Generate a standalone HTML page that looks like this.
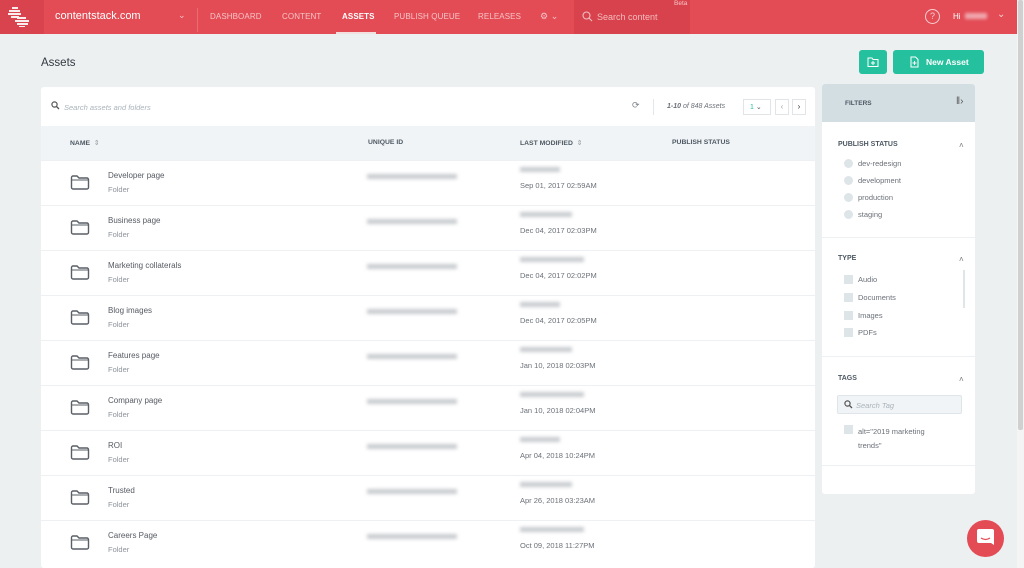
<!DOCTYPE html>
<html><head><meta charset="utf-8"><style>
*{box-sizing:border-box;margin:0;padding:0}
body{width:1024px;height:568px;overflow:hidden;background:#edf0f1;font-family:"Liberation Sans",sans-serif;position:relative;color:#4a4f56}
.top{position:absolute;left:0;top:0;width:1017px;height:34px;background:#e34b55}
.abs{position:absolute}
.nav{position:absolute;top:12px;font-size:8px;color:#f6c4c7;letter-spacing:.1px}
.blur{position:absolute;background:#c9ccd0;filter:blur(1.8px);height:5px}
.row{position:absolute;left:41px;width:774px;height:45px;border-top:1px solid #eef1f3;background:#fff}
.ttl{position:absolute;left:67px;top:10px;font-size:8px;color:#555a62}
.sub{position:absolute;left:67px;top:24px;font-size:7.5px;color:#8e949b}
.dt{position:absolute;left:479px;top:20px;font-size:7.5px;color:#6b7178}
.side{position:absolute;left:822px;top:84px;width:153px;height:410px;background:#fff;border-radius:3px;overflow:hidden}
.h{position:absolute;font-size:7px;font-weight:bold;color:#4d5863}
.opt{position:absolute;font-size:7.5px;color:#6b7178}
.dot{position:absolute;width:9px;height:9px;border-radius:50%;background:#dde5e8}
.cb{position:absolute;width:9px;height:9px;background:#dde5e8}
</style></head><body>
<div class="top"></div>
<div class="abs" style="left:0;top:0;width:44px;height:34px;background:#d9434d"></div>
<svg class="abs" style="left:8px;top:7px" width="26" height="20"><g fill="#fff" opacity=".9">
<rect x="4" y="0" width="6" height="2"/><rect x="1" y="3" width="11" height="2"/><rect x="0" y="6" width="13" height="2"/><rect x="3" y="9" width="8" height="2"/>
<rect x="9" y="10" width="9" height="2"/><rect x="7" y="13" width="14" height="2"/><rect x="9" y="16" width="11" height="2"/><rect x="11" y="19" width="6" height="1.5"/></g></svg>
<div class="abs" style="left:55px;top:10px;font-size:11px;color:#fff">contentstack.com</div>
<div class="abs" style="left:178px;top:10px;font-size:9px;color:#f6c4c7">⌄</div>
<div class="abs" style="left:197px;top:8px;width:1px;height:24px;background:#ea6b73"></div>
<div class="nav" style="left:210px">DASHBOARD</div>
<div class="nav" style="left:282px">CONTENT</div>
<div class="nav" style="left:342px;color:#fff;font-weight:bold">ASSETS</div>
<div class="abs" style="left:336px;top:32px;width:40px;height:2px;background:#f2dfe0"></div>
<div class="nav" style="left:394px">PUBLISH QUEUE</div>
<div class="nav" style="left:478px">RELEASES</div>
<div class="nav" style="left:540px;font-size:9px;top:11px">⚙ ⌄</div>
<div class="abs" style="left:574px;top:0;width:116px;height:34px;background:#d8424c"></div>
<svg class="abs" style="left:582px;top:11px" width="11" height="11"><circle cx="4.5" cy="4.5" r="3.5" fill="none" stroke="#f2bcc0" stroke-width="1.1"/><line x1="7" y1="7" x2="10" y2="10" stroke="#f2bcc0" stroke-width="1.1"/></svg>
<div class="abs" style="left:597px;top:12px;font-size:9px;color:#f2bcc0">Search content</div>
<div class="abs" style="left:674px;top:0;font-size:6.5px;color:#f6c4c7">Beta</div>
<div class="abs" style="left:925px;top:9px;width:15px;height:15px;border:1.2px solid #f6d0d3;border-radius:50%;color:#f6d0d3;font-size:9px;text-align:center;line-height:13px">?</div>
<div class="abs" style="left:953px;top:12px;font-size:8px;color:#fff">Hi</div>
<div class="abs" style="left:965px;top:13px;width:22px;height:6px;background:#f0a7ad;filter:blur(1.5px)"></div>
<div class="abs" style="left:997px;top:9px;font-size:10px;color:#f6d0d3">⌄</div>
<div class="abs" style="left:1017px;top:0;width:7px;height:568px;background:#f4f4f4"></div>
<div class="abs" style="left:1018px;top:0;width:5px;height:430px;background:#d0d0d0;border-radius:2px"></div>

<div class="abs" style="left:41px;top:57px;font-size:11.5px;color:#333a42">Assets</div>
<div class="abs" style="left:859px;top:50px;width:28px;height:24px;background:#25c09e;border-radius:3px"></div>
<svg class="abs" style="left:867px;top:57px" width="12" height="10"><path d="M1 1h4l1 1.5h5v7H1z" fill="none" stroke="#fff" stroke-width="1"/><path d="M6 4v4M4 6h4" stroke="#fff"/></svg>
<div class="abs" style="left:893px;top:50px;width:91px;height:24px;background:#25c09e;border-radius:3px"></div>
<svg class="abs" style="left:910px;top:56px" width="9" height="12"><path d="M1 1h4.5L8 3.5V11H1z" fill="none" stroke="#fff"/><path d="M4.5 5v4M2.5 7h4" stroke="#fff"/></svg>
<div class="abs" style="left:926px;top:57px;font-size:8.5px;color:#fff;font-weight:bold">New Asset</div>

<div class="abs" style="left:41px;top:87px;width:774px;height:481px;background:#fff;border-radius:3px"></div>
<svg class="abs" style="left:51px;top:101px" width="9" height="9"><circle cx="3.5" cy="3.5" r="2.6" fill="none" stroke="#555" stroke-width="1.2"/><line x1="5.5" y1="5.5" x2="8" y2="8" stroke="#555" stroke-width="1.3"/></svg>
<div class="abs" style="left:64px;top:103px;font-size:7.5px;color:#a9b3bb;font-style:italic">Search assets and folders</div>
<div class="abs" style="left:632px;top:100px;font-size:9px;color:#7a8088">⟳</div>
<div class="abs" style="left:653px;top:99px;width:1px;height:16px;background:#e3e7ea"></div>
<div class="abs" style="left:667px;top:103px;font-size:7px;color:#6b7178;font-style:italic"><b>1-10</b> of 848 Assets</div>
<div class="abs" style="left:743px;top:99px;width:28px;height:16px;border:1px solid #e1e5e8;font-size:7px;color:#25c09e;padding:3px 0 0 6px">1 <span style="color:#555">⌄</span></div>
<div class="abs" style="left:775px;top:99px;width:14px;height:16px;border:1px solid #e1e5e8;font-size:8px;color:#aaa;text-align:center;line-height:14px">‹</div>
<div class="abs" style="left:792px;top:99px;width:14px;height:16px;border:1px solid #e1e5e8;font-size:8px;color:#333;text-align:center;line-height:14px">›</div>
<div class="abs" style="left:41px;top:126px;width:774px;height:34px;background:#f1f4f6"></div>
<div class="h" style="left:70px;top:139px;font-size:6.8px">NAME &nbsp;<span style="font-weight:normal;color:#999">⇕</span></div>
<div class="h" style="left:368px;top:139px;font-size:6.8px">UNIQUE ID</div>
<div class="h" style="left:520px;top:139px;font-size:6.8px">LAST MODIFIED &nbsp;<span style="font-weight:normal;color:#999">⇕</span></div>
<div class="h" style="left:672px;top:139px;font-size:6.8px">PUBLISH STATUS</div>

<div id="rows"></div>
<script>
var d=[["Developer page","Sep 01, 2017 02:59AM"],["Business page","Dec 04, 2017 02:03PM"],["Marketing collaterals","Dec 04, 2017 02:02PM"],["Blog images","Dec 04, 2017 02:05PM"],["Features page","Jan 10, 2018 02:03PM"],["Company page","Jan 10, 2018 02:04PM"],["ROI","Apr 04, 2018 10:24PM"],["Trusted","Apr 26, 2018 03:23AM"],["Careers Page","Oct 09, 2018 11:27PM"]];
var h="";d.forEach(function(r,i){var t=160+i*45;h+='<div class="row" style="top:'+t+'px"><svg style="position:absolute;left:29px;top:13px" width="20" height="16"><path d="M1.5 3.5a1.5 1.5 0 0 1 1.5-1.5h4l2 2h8a1.5 1.5 0 0 1 1.5 1.5v8a1.5 1.5 0 0 1-1.5 1.5H3a1.5 1.5 0 0 1-1.5-1.5z" fill="none" stroke="#5a5f66" stroke-width="1.4"/><line x1="2" y1="6" x2="18" y2="6" stroke="#5a5f66" stroke-width="1"/></svg><div class="ttl">'+r[0]+'</div><div class="sub">Folder</div><div class="blur" style="left:326px;top:13px;width:90px"></div><div class="blur" style="left:479px;top:6px;width:'+(40+(i%3)*12)+'px"></div><div class="dt">'+r[1]+'</div></div>'});
document.getElementById("rows").innerHTML=h;
</script>

<div class="side">
<div class="abs" style="left:0;top:0;width:153px;height:38px;background:#d3dee3"></div>
<div class="h" style="left:23px;top:16px;font-size:6.5px">FILTERS</div>
<div class="abs" style="left:134px;top:12px;font-size:10px;color:#555">‖›</div>
<div class="h" style="left:16px;top:57px">PUBLISH STATUS</div><div class="abs" style="left:137px;top:57px;font-size:8px;color:#777">˄</div>
<div class="dot" style="left:22px;top:75px"></div><div class="opt" style="left:36px;top:75px">dev-redesign</div>
<div class="dot" style="left:22px;top:92px"></div><div class="opt" style="left:36px;top:92px">development</div>
<div class="dot" style="left:22px;top:109px"></div><div class="opt" style="left:36px;top:109px">production</div>
<div class="dot" style="left:22px;top:126px"></div><div class="opt" style="left:36px;top:126px">staging</div>
<div class="abs" style="left:0;top:153px;width:153px;height:1px;background:#eef1f3"></div>
<div class="h" style="left:16px;top:171px">TYPE</div><div class="abs" style="left:137px;top:171px;font-size:8px;color:#777">˄</div>
<div class="abs" style="left:141px;top:186px;width:2px;height:38px;background:#e0e5e8"></div>
<div class="cb" style="left:22px;top:191px"></div><div class="opt" style="left:36px;top:191px">Audio</div>
<div class="cb" style="left:22px;top:209px"></div><div class="opt" style="left:36px;top:209px">Documents</div>
<div class="cb" style="left:22px;top:227px"></div><div class="opt" style="left:36px;top:227px">Images</div>
<div class="cb" style="left:22px;top:244px"></div><div class="opt" style="left:36px;top:244px">PDFs</div>
<div class="abs" style="left:0;top:272px;width:153px;height:1px;background:#eef1f3"></div>
<div class="h" style="left:16px;top:291px">TAGS</div><div class="abs" style="left:137px;top:291px;font-size:8px;color:#777">˄</div>
<div class="abs" style="left:15px;top:311px;width:125px;height:19px;background:#f1f4f6;border:1px solid #dfe5e8;border-radius:2px"></div>
<svg class="abs" style="left:22px;top:316px" width="9" height="9"><circle cx="3.5" cy="3.5" r="2.6" fill="none" stroke="#555" stroke-width="1.2"/><line x1="5.5" y1="5.5" x2="8" y2="8" stroke="#555" stroke-width="1.3"/></svg>
<div class="opt" style="left:34px;top:317px;color:#a9b3bb;font-style:italic">Search Tag</div>
<div class="cb" style="left:22px;top:341px"></div><div class="opt" style="left:36px;top:341px;line-height:14px">alt="2019 marketing<br>trends"</div>
<div class="abs" style="left:0;top:381px;width:153px;height:1px;background:#eef1f3"></div>
</div>
<div class="abs" style="left:967px;top:520px;width:37px;height:37px;border-radius:50%;background:#e34b55"></div>
<svg class="abs" style="left:977px;top:529px" width="17" height="19"><path d="M2 0h13a2 2 0 0 1 2 2v14l-3-2H2a2 2 0 0 1-2-2V2a2 2 0 0 1 2-2z" fill="#fff"/><path d="M4 9q4.5 3 9 0" fill="none" stroke="#e34b55" stroke-width="1.3"/></svg>
</body></html>
